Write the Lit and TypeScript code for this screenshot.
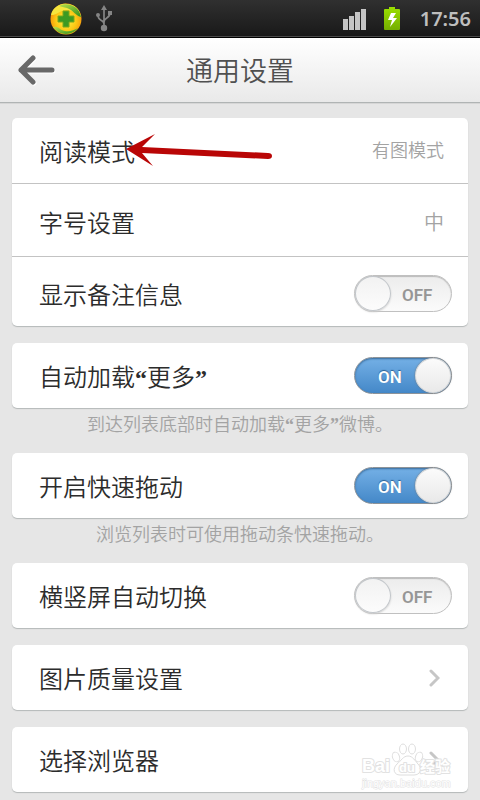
import { LitElement, html, css, nothing } from "lit";
import { customElement, property, state } from "lit/decorators.js";

@customElement("status-bar")
class StatusBar extends LitElement {
  static styles = css`
    :host {
      display: block;
    }
    .bar {
      display: flex;
      align-items: center;
      height: 36px;
      padding: 0 9px 0 50px;
      border-bottom: 1px solid #4a4a4a;
      box-shadow: 0 1px 0 #000;
      margin-bottom: 1px;
      background: linear-gradient(#303030, #191919);
    }
    .spacer {
      flex: 1;
    }
    .shield {
      width: 32px;
      height: 32px;
      margin-top: 2px;
    }
    .usb {
      width: 18px;
      height: 28px;
      margin-left: 13px;
    }
    .signal {
      width: 24px;
      height: 24px;
      margin-right: 16px;
    }
    .battery {
      width: 18px;
      height: 26px;
      margin-right: 19px;
    }
    .signal,
    .battery,
    time {
      margin-top: 2px;
    }
    time {
      color: #bebebe;
      font: 600 20px/24px "Noto Sans", sans-serif;
    }
  `;

  render() {
    return html`
      <div class="bar">
        <svg class="shield" viewBox="0 0 32 32" aria-hidden="true">
          <defs>
            <radialGradient id="gold" cx="50%" cy="55%" r="55%">
              <stop offset="0" stop-color="#fff04a" />
              <stop offset=".6" stop-color="#fcc915" />
              <stop offset="1" stop-color="#f5920a" />
            </radialGradient>
            <linearGradient id="leaf" x2="1" y2="1">
              <stop offset="0" stop-color="#b9e04a" />
              <stop offset="1" stop-color="#2c8c1c" />
            </linearGradient>
          </defs>
          <circle cx="16" cy="16" r="15.5" fill="url(#gold)" />
          <path d="M1 12C3 4 10 0 17 1c7 0 13 5 14 13-5-1-6-6-13-7C11 6 8 12 1 12Z" fill="#f6e63e" />
          <path d="M9 3c7-4 20-1 22 11-5-1-8-7-14-9C14 4 11 4 9 3Z" fill="url(#leaf)" />
          <path d="M3 24c6-1 6 3 12 4 5 1 9-1 13-3-5 7-18 9-25-1Z" fill="url(#leaf)" />
          <path d="M13 8h6v5h5v6h-5v5h-6v-5H8v-6h5Z" fill="#3c9a22" stroke="#78a81c" stroke-linejoin="round" />
        </svg>
        <svg class="usb" viewBox="0 0 18 28" aria-hidden="true" fill="none" stroke="#858585" stroke-width="1.7">
          <path d="M9 24V5M9 20c0-5-6-2-6-9M9 18c0-5 6-3 6-9" />
          <circle cx="9" cy="24" r="3.2" fill="#858585" stroke="none" />
          <path d="M9 1l3 5H6Z" fill="#858585" stroke="none" />
          <circle cx="3" cy="11" r="2" fill="#858585" stroke="none" />
          <path d="M13 7h4v4h-4Z" fill="#858585" stroke="none" />
        </svg>
        <span class="spacer"></span>
        <svg class="signal" viewBox="0 0 24 24" aria-hidden="true" fill="#c4c4c4">
          <rect x="0" y="12" width="5" height="11" />
          <rect x="6" y="9" width="5" height="14" />
          <rect x="12" y="5" width="5" height="18" />
          <rect x="18" y="2" width="5" height="21" />
        </svg>
        <svg class="battery" viewBox="0 0 18 26" aria-hidden="true">
          <defs>
            <linearGradient id="charge" x2="0" y2="1">
              <stop offset="0" stop-color="#9be000" />
              <stop offset="1" stop-color="#74ae00" />
            </linearGradient>
          </defs>
          <path d="M6 1h6v2h4q1 0 1 1v19q0 1-1 1H2q-1 0-1-1V4q0-1 1-1h4Z" fill="url(#charge)" />
          <path d="M8 7h5l-3 5h4l-7 9 2-7H5Z" fill="#fff" />
        </svg>
        <time>17:56</time>
      </div>
    `;
  }
}

@customElement("toggle-switch")
class ToggleSwitch extends LitElement {
  static styles = css`
    :host {
      display: block;
    }
    .switch {
      display: grid;
      width: 98px;
      height: 37px;
    }
    input,
    .word {
      grid-area: 1 / 1;
    }
    input {
      appearance: none;
      box-sizing: border-box;
      width: 98px;
      height: 37px;
      margin: 0;
      border: 1px solid #c0c0c0;
      border-radius: 19px;
      background: linear-gradient(#ececec, #fbfbfb);
      box-shadow: inset 0 1px 1px #bbb;
      cursor: pointer;
    }
    input::before {
      content: "";
      display: block;
      box-sizing: border-box;
      width: 36px;
      height: 35px;
      border: 1px solid #c2c6ca;
      border-radius: 50%;
      background: linear-gradient(#f2f2f2, #fcfcfc);
      box-shadow: 0 1px 2px #ccc;
    }
    input:checked {
      border-color: #8d9399;
      background: linear-gradient(#74b0e6, #4488c8);
      box-shadow: inset 0 1px 2px #35699a;
    }
    input:checked::before {
      margin-left: auto;
      border-color: #d8d8d8;
      background: linear-gradient(#fbfbfb, #e9e9e9);
      box-shadow: 0 0 2px #777;
    }
    .word {
      align-self: center;
      padding: 2px 0 0 48px;
      color: #969696;
      font: 600 17px/20px Roboto, sans-serif;
      pointer-events: none;
      z-index: 1;
    }
    input:checked + .word {
      padding-left: 24px;
      color: #fff;
      text-shadow: 0 -1px 1px #2b5f92;
    }
  `;

  @property({ type: Boolean }) on = false;
  @property() name = "";

  render() {
    return html`
      <label class="switch">
        <input
          type="checkbox"
          role="switch"
          aria-label=${this.name}
          .checked=${this.on}
          @change=${(e: Event) => (this.on = (e.target as HTMLInputElement).checked)}
        />
        <span class="word" aria-hidden="true">${this.on ? "ON" : "OFF"}</span>
      </label>
    `;
  }
}

type Row = { label: string; kind: "value" | "toggle" | "link"; value?: string; on?: boolean; size?: string };
type Group = { rows: Row[]; hint?: string };

@customElement("app-root")
class AppRoot extends LitElement {
  static styles = css`
    :host {
      display: block;
      min-height: 100vh;
      background: #e6e6e6;
      color: #2c2c2c;
      font-family: "Noto Sans CJK SC", sans-serif;
      font-weight: 350;
    }
    .header {
      display: grid;
      grid-template-columns: 72px 1fr 72px;
      align-items: center;
      height: 64px;
      border-bottom: 1px solid #b0b4b4;
      background: linear-gradient(#fff, #e9e9e9);
      box-shadow: 0 1px 0 #d6d6d6;
    }
    .header h1 {
      margin: 0;
      text-align: center;
      color: #505050;
      font-size: 27px;
      line-height: 36px;
      font-weight: 350;
    }
    .back {
      padding: 0;
      border: 0;
      background: none;
      height: 64px;
      cursor: pointer;
    }
    .back svg {
      display: block;
      width: 38px;
      height: 32px;
      margin-left: 18px;
    }
    main {
      position: relative;
      display: flex;
      flex-direction: column;
      padding: 15px 12px 8px;
    }
    .group {
      margin-bottom: 17px;
    }
    .group:last-of-type {
      margin-bottom: 0;
    }
    .group.hinted {
      margin-bottom: 14px;
    }
    .card {
      border-radius: 5px;
      background: #fff;
      box-shadow: 0 1px 1px #b4b8b8;
    }
    .row {
      display: flex;
      align-items: center;
      justify-content: space-between;
      box-sizing: border-box;
      width: 100%;
      height: 65px;
      padding: 0 16px 0 27px;
      border: 0;
      background: none;
      color: inherit;
      font: inherit;
      font-size: 24px;
      line-height: 32px;
      text-align: left;
      text-decoration: none;
    }
    .row + .row {
      border-top: 1px solid #c3c3c3;
      height: 73px;
      padding-top: 4px;
    }
    .row + .row:last-child {
      height: 70px;
    }
    .value {
      padding: 0 8px 4px 0;
      color: #a3a3a3;
      font-size: 18px;
    }
    .value.large {
      padding-bottom: 0;
      font-size: 20px;
    }
    .hint {
      margin: 0;
      padding: 3px 0 3px;
      color: #a3a3a3;
      font-size: 18px;
      line-height: 25px;
      text-align: center;
    }
    .quote {
      font-family: "Liberation Serif", serif;
      font-weight: 700;
      line-height: 1;
    }
    .chevron {
      width: 12px;
      height: 20px;
      margin-right: 12px;
    }
    .pointer {
      position: absolute;
      left: 124px;
      top: 28px;
      width: 152px;
      height: 36px;
      pointer-events: none;
    }
    .mark {
      position: absolute;
      right: 24px;
      bottom: 10px;
      width: 96px;
      height: 52px;
      pointer-events: none;
    }
    .mark text {
      fill: #fff;
      stroke: #e2e2e2;
      stroke-width: 2px;
      stroke-linejoin: round;
      paint-order: stroke;
      font-family: "Liberation Sans", "Noto Sans CJK SC", sans-serif;
      font-weight: bold;
    }
    .mark .url {
      font-weight: normal;
      stroke-width: 1px;
    }
  `;

  @state() private groups: Group[] = [
    {
      rows: [
        { label: "阅读模式", kind: "value", value: "有图模式" },
        { label: "字号设置", kind: "value", value: "中", size: "large" },
        { label: "显示备注信息", kind: "toggle", on: false },
      ],
    },
    { rows: [{ label: "自动加载“更多”", kind: "toggle", on: true }], hint: "到达列表底部时自动加载“更多”微博。" },
    { rows: [{ label: "开启快速拖动", kind: "toggle", on: true }], hint: "浏览列表时可使用拖动条快速拖动。" },
    { rows: [{ label: "横竖屏自动切换", kind: "toggle", on: false }] },
    { rows: [{ label: "图片质量设置", kind: "link" }] },
    { rows: [{ label: "选择浏览器", kind: "link" }] },
  ];

  private words(s: string) {
    return s.split(/([“”])/).map((p) => (/[“”]/.test(p) ? html`<span class="quote">${p}</span>` : p));
  }

  private row(r: Row) {
    if (r.kind === "toggle") {
      return html`<div class="row">
        <span>${this.words(r.label)}</span>
        <toggle-switch .name=${r.label} .on=${!!r.on}></toggle-switch>
      </div>`;
    }
    if (r.kind === "value") {
      return html`<button class="row">
        <span>${r.label}</span><span class="value ${r.size ?? ""}">${r.value}</span>
      </button>`;
    }
    return html`<a class="row" href="#">
      <span>${r.label}</span>
      <svg class="chevron" viewBox="0 0 12 20" aria-hidden="true" fill="none" stroke="#c6c6c6" stroke-width="3" stroke-linecap="round">
        <path d="M3 3l7 7-7 7" />
      </svg>
    </a>`;
  }

  render() {
    return html`
      <status-bar></status-bar>
      <header class="header">
        <button class="back" aria-label="返回">
          <svg viewBox="0 0 38 32" fill="none" stroke="#686868" stroke-width="5" stroke-linecap="round" stroke-linejoin="round">
            <path d="M16 4L4 16l12 12M4 16h31" stroke="#fff" transform="translate(0 1)" />
            <path d="M15 4L3 16l12 12M3 16h31" />
          </svg>
        </button>
        <h1>通用设置</h1>
      </header>
      <main>
        ${this.groups.map(
          (g) => html`<section class="group ${g.hint ? "hinted" : ""}">
            <div class="card">${g.rows.map((r) => this.row(r))}</div>
            ${g.hint ? html`<p class="hint">${this.words(g.hint)}</p>` : nothing}
          </section>`,
        )}
        <svg class="pointer" viewBox="0 0 152 36" aria-hidden="true" fill="#b90606">
          <path d="M2 18L31 3 18 16l126 6q4 0 4 3t-4 3L18 22l11 13Z" />
        </svg>
        <svg class="mark" viewBox="0 0 96 52" aria-hidden="true">
          <g fill="#fff" stroke="#dedede">
            <ellipse cx="36" cy="19" rx="3.5" ry="5" transform="rotate(-20 36 19)" />
            <ellipse cx="43" cy="11" rx="3.5" ry="5" />
            <ellipse cx="52" cy="11" rx="3.5" ry="5" />
            <ellipse cx="59" cy="19" rx="3.5" ry="5" transform="rotate(20 59 19)" />
            <path d="M48 18c5 0 7 5 10 8 5 5 2 11-4 11H40c-6 0-8-6-3-11 4-3 6-8 11-8Z" />
          </g>
          <text x="2" y="34" font-size="18">Bai</text>
          <text x="39" y="34" font-size="13">du</text>
          <text x="60" y="34" font-size="15">经验</text>
          <text class="url" x="2" y="49" font-size="11">jingyan.baidu.com</text>
        </svg>
      </main>
    `;
  }
}
